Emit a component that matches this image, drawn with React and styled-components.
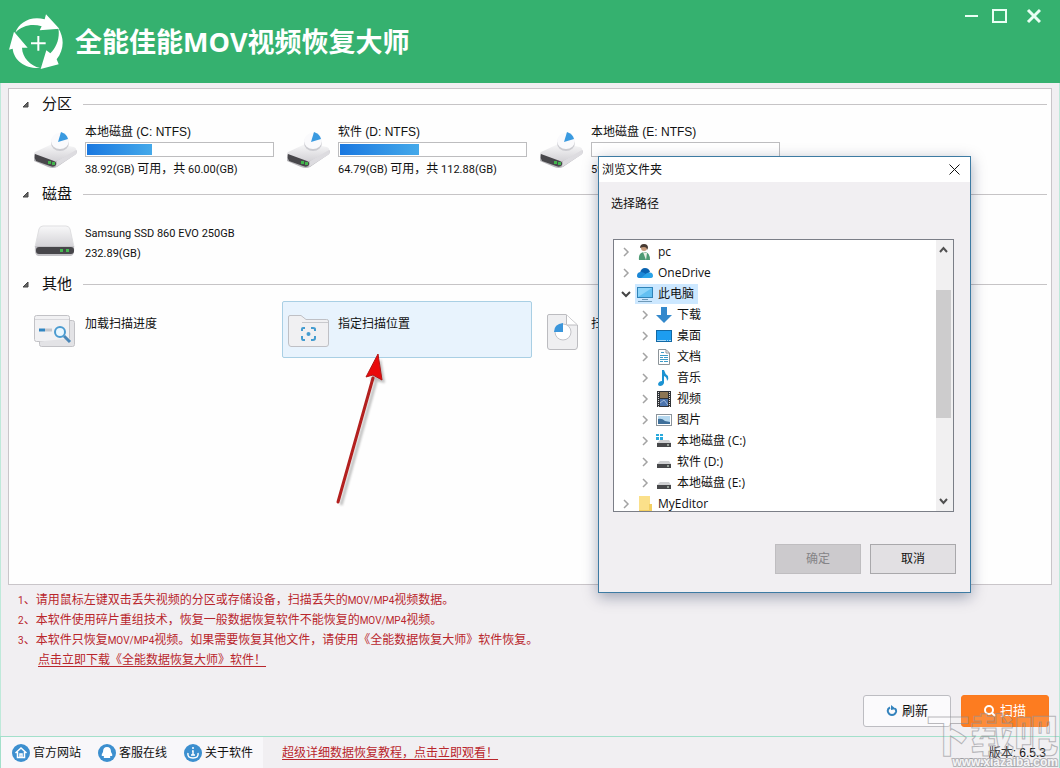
import React, { useState } from "react";
import styled, { createGlobalStyle } from "styled-components";

const GlobalStyle = createGlobalStyle`
  * {
    box-sizing: border-box;
  }
  body {
    margin: 0;
    font-family: "Liberation Sans", "Noto Sans CJK SC", sans-serif;
    font-size: 12px;
    line-height: 20px;
    color: #111;
  }
  button {
    font: inherit;
    color: inherit;
    padding: 0;
    border: 0;
    background: none;
  }
  svg {
    display: block;
    flex: none;
  }
`;

const Window = styled.div`
  position: relative;
  display: flex;
  flex-direction: column;
  min-height: 100vh;
  background: #f1eff2;
  overflow: hidden;
`;

const Header = styled.header`
  display: flex;
  align-items: center;
  height: 83px;
  padding: 0 19px 0 9px;
  background: #35b16f;
  color: #fff;
`;
const Title = styled.h1`
  flex: 1;
  margin: 0 0 0 12px;
  font: bold 27px/40px "Open Sans", "Noto Sans CJK SC", sans-serif;
`;
const WindowButtons = styled.div`
  display: flex;
  align-self: flex-start;
  gap: 13px;
  padding-top: 8px;
`;
const WindowButton = styled.button`
  width: 15px;
  height: 16px;
  margin-left: ${(p) => (p.$apart ? "6px" : "0")};
`;

const Main = styled.main`
  flex: 1;
  display: flex;
  flex-direction: column;
  padding: 5px 7px 9px;
  border: solid #bfe9da;
  border-width: 0 1px;
`;
const Panel = styled.div`
  flex: 1;
  padding: 5px 4px 0 12px;
  background: #fefefe;
  border: 1px solid #c9c5c9;
`;
const Section = styled.section`
  height: 90px;
`;
const SectionHeader = styled.h2`
  display: flex;
  align-items: center;
  margin: 0;
  height: 20px;
  font-size: 15px;
  font-weight: normal;
  &::after {
    content: "";
    flex: 1;
    margin-left: 11px;
    border-top: 1px solid #c6c4c6;
  }
  svg {
    margin-right: 13px;
  }
`;
const Tiles = styled.div`
  display: grid;
  grid-template-columns: repeat(auto-fill, 250px);
  gap: 3px;
  padding: 7px 0 0 8px;
`;
const Tile = styled.button`
  display: flex;
  height: 57px;
  padding: ${(p) => (p.$drive ? "0 0 0 4px" : "12px 0 0 4px")};
  border: 1px solid ${(p) => (p.$active ? "#a9cfe4" : "transparent")};
  border-radius: 2px;
  background: ${(p) => (p.$active ? "#e8f3fd" : "none")};
  text-align: left;
  > svg {
    margin-top: ${(p) => (p.$drive ? "6px" : "-6px")};
  }
`;
const TileText = styled.div`
  width: 189px;
  margin-left: 7px;
`;
const TileTitle = styled.div`
  height: 20px;
`;
const Small = styled.div`
  height: 20px;
  font-family: Roboto, "Noto Sans CJK SC", sans-serif;
  font-size: 11px;
  white-space: nowrap;
`;
const Han = styled.span`
  font-size: 12px;
`;
const Bar = styled.div`
  height: 15px;
  margin-bottom: 2px;
  padding: 1px;
  border: 1px solid #bdbdbf;
  background: #fff;
`;
const BarFill = styled.div`
  height: 11px;
  background: linear-gradient(90deg, #1a78e0, #44a9ea);
`;

const Notices = styled.ol`
  margin: 5px 0 25px;
  padding: 0 0 0 10px;
  list-style: none;
  color: #b9262c;
`;
const Notice = styled.li`
  height: 20px;
  font-family: Roboto, "Noto Sans CJK SC", sans-serif;
  padding-left: ${(p) => (p.$indent ? "20px" : "0")};
`;
const Latin = styled.span`
  font-size: 10px;
`;
const RedLink = styled.a`
  color: #b9262c;
  text-decoration: underline;
  text-underline-offset: 2px;
`;

const Actions = styled.div`
  display: flex;
  justify-content: flex-end;
  gap: 10px;
  padding-right: 3px;
`;
const Action = styled.button`
  display: flex;
  align-items: center;
  justify-content: center;
  gap: 4px;
  width: 88px;
  height: 32px;
  font-size: 13px;
  border-radius: 3px;
  border: 1px solid ${(p) => (p.$primary ? "#fb7a1e" : "#bdbdc2")};
  background: ${(p) => (p.$primary ? "#fd7c20" : "#fbfafc")};
  color: ${(p) => (p.$primary ? "#fff" : "#111")};
`;

const Footer = styled.footer`
  display: flex;
  align-items: center;
  height: 32px;
  padding-right: 13px;
  border: 1px solid #a3e0cb;
  border-bottom: 0;
`;
const FooterNav = styled.nav`
  display: flex;
  align-items: center;
  gap: 17px;
  height: 31px;
  padding: 0 10px 0 11px;
  margin-right: 19px;
  background: #f8f7fa;
`;
const NavLink = styled.a`
  display: flex;
  align-items: center;
  gap: 3px;
  color: #111;
  text-decoration: none;
`;
const Version = styled.span`
  margin-left: auto;
`;

/* folder dialog */
const Dialog = styled.div`
  position: absolute;
  left: 598px;
  top: 156px;
  width: 373px;
  border: 1px solid #3d7ba3;
  background: #f1eff2;
  box-shadow: 0 4px 14px rgba(0, 20, 60, 0.35);
  font-family: "Open Sans", "Noto Sans CJK SC", sans-serif;
`;
const DialogHeader = styled.div`
  display: flex;
  align-items: center;
  justify-content: space-between;
  height: 25px;
  padding: 0 10px 0 3px;
  background: #fff;
`;
const DialogBody = styled.div`
  padding: 12px 14px 18px;
`;
const DialogLabel = styled.div`
  margin: 0 0 25px -2px;
`;
const TreeBox = styled.div`
  display: flex;
  height: 273px;
  margin-right: 2px;
  overflow: hidden;
  border: 1px solid #7b7e87;
  background: #fff;
`;
const Tree = styled.ul`
  flex: 1;
  margin: 0;
  padding: 1px 0 0 7px;
  list-style: none;
`;
const TreeRow = styled.li`
  display: flex;
  align-items: center;
  height: 21px;
  padding-left: ${(p) => (p.$level ? "19px" : "0")};
`;
const Twisty = styled.button`
  width: 10px;
  height: 10px;
  margin-right: 4px;
`;
const TreeLabel = styled.span`
  display: flex;
  align-items: center;
  gap: 5px;
  padding: 0 4px 0 2px;
  background: ${(p) => (p.$selected ? "#cde8ff" : "none")};
`;
const ScrollBar = styled.div`
  display: flex;
  flex-direction: column;
  width: 17px;
  padding-right: 2px;
  background: #f1f0f1;
`;
const ScrollButton = styled.button`
  display: flex;
  align-items: center;
  justify-content: center;
  height: 19px;
`;
const ScrollTrack = styled.div`
  flex: 1;
  padding-top: 31px;
`;
const ScrollThumb = styled.div`
  height: 128px;
  background: #cdcccd;
`;
const DialogButtons = styled.div`
  display: flex;
  justify-content: flex-end;
  gap: 9px;
  margin-top: 32px;
`;
const DialogButton = styled.button`
  width: 86px;
  height: 30px;
  border: 1px solid ${(p) => (p.disabled ? "#bfbdc0" : "#a9a8ab")};
  background: ${(p) => (p.disabled ? "#cccacd" : "#e2e0e3")};
  color: ${(p) => (p.disabled ? "#858487" : "#111")};
`;

const Arrow = styled.svg`
  position: absolute;
  left: 330px;
  top: 350px;
  pointer-events: none;
`;
const ArrowShadow = styled.g`
  filter: blur(1px);
  opacity: 0.3;
`;
const Watermark = styled.div`
  position: absolute;
  right: 2px;
  bottom: 0;
  text-align: right;
  pointer-events: none;
  font-family: "Noto Sans CJK SC", sans-serif;
  font-weight: 900;
  color: rgba(255, 255, 255, 0.15);
  -webkit-text-stroke: 1px rgba(140, 140, 145, 0.6);
`;
const WatermarkName = styled.div`
  font-size: 44px;
  line-height: 46px;
`;
const WatermarkUrl = styled.div`
  font: bold 12px/12px "Liberation Sans", sans-serif;
  color: #f4f4f6;
  -webkit-text-stroke: 2px rgba(140, 140, 145, 0.6);
  paint-order: stroke;
`;

const Logo = () => (
  <svg width="54" height="56" viewBox="27 42 162 168" fill="#fff">
    <path d="M46 98C56 68 92 46 134 58L138 43L178 86L119 91L125 79C96 70 66 77 46 98Z" />
    <path d="M175 84C194 116 192 150 170 178L176 193L122 207L139 151L151 160C171 141 180 112 175 84Z" />
    <path d="M42 95L83 143L66 143C67 173 91 197 120 204C78 207 42 183 38 146L27 149Z" />
    <path d="M112 108h6v19h19v6h-19v19h-6v-19h-19v-6h19z" />
  </svg>
);

const DriveIcon = () => (
  <svg width="44" height="44" viewBox="1 0 44 44">
    <defs>
      <linearGradient id="shell" x1="0" y1="0" x2="0" y2="1">
        <stop offset="0" stopColor="#f8f8f9" />
        <stop offset="1" stopColor="#d3d2d6" />
      </linearGradient>
    </defs>
    <path d="M2 25L17 18Q20 16 24 17L42 21Q45 23 43 26L24 39Q20 41 15 39L1 33Q-1 30 2 25Z" fill="#b9b8bc" />
    <path d="M2 24L17 17Q20 15 25 16L41 19Q45 21 42 24L24 33Q20 34 16 32L3 27Q0 26 2 24Z" fill="url(#shell)" />
    <path d="M24 33L43 22Q45 25 42 27L23 39Z" fill="#dddce0" />
    <path d="M2 26L21 33Q24 34 23 37Q21 40 17 38L3 33Q1 30 2 26Z" fill="#48474b" />
    <path d="M15 33h3v3h-3zM19 34h3v3h-3z" fill="#43b44d" />
    <ellipse cx="27" cy="15" rx="9" ry="8" fill="#cbcbd0" />
    <ellipse cx="27" cy="13" rx="9" ry="8" fill="#fafafc" />
    <path d="M25 14L28 4Q34 6 35 11Z" fill="#3a9ae0" />
  </svg>
);

const DiskIcon = () => (
  <svg width="44" height="44" viewBox="1 -1 44 44">
    <path d="M6 10Q7 7 10 7H33Q36 7 37 10L41 28H2Z" fill="url(#shell)" stroke="#dfdfe1" />
    <path d="M2 27H41Q42 36 38 37H5Q1 36 2 27Z" fill="#c3c2c6" />
    <rect x="3" y="28" width="38" height="7" rx="3" fill="#47464a" />
    <path d="M27 30h3v3h-3zM33 30h3v3h-3z" fill="#45b850" />
  </svg>
);

const ProgressIcon = () => (
  <svg width="44" height="44" viewBox="0 -2 44 44" fill="#f1f1f3" stroke="#c2c2c6">
    <rect x="5.500" y="10.500" width="35" height="21" rx="2" fill="#e3e3e6" />
    <rect x="0.500" y="5.500" width="35" height="26" rx="2" />
    <path d="M5.500 31.500V34.500Q5.500 36.500 7.500 36.500H38.500Q40.500 36.500 40.500 34.500V28" fill="#e3e3e6" />
    <path d="M1 9.500H35" stroke="#d8d8dc" />
    <path d="M5 20H11" stroke="#3186c2" strokeWidth="3" />
    <path d="M11 20H18" stroke="#c5c7cc" strokeWidth="3" />
    <path d="M30 26L36 32" stroke="#4b87b8" strokeWidth="3" />
    <circle cx="26" cy="22" r="5" fill="#e9f7ff" stroke="#4b9bd0" strokeWidth="2" />
  </svg>
);

const FolderIcon = () => (
  <svg width="44" height="44" viewBox="0 -1 44 44" fill="none">
    <path d="M1.500 34V8Q1.500 6.500 3 6.500H14L19 10.500H39.500Q41.500 10.500 41.500 12V35Q41.500 37.500 39 37.500H4Q1.500 37.500 1.500 34Z" fill="#f0f0f2" stroke="#bfc0c5" />
    <path d="M15 13.500H41" stroke="#c8c9cd" />
    <path d="M15 22V20Q15 19 16 19H18M24 19H26Q28 19 28 20V22M28 27V29Q28 31 26 31H24M18 31H16Q15 31 15 29V27" stroke="#439cd0" strokeWidth="2" />
    <circle cx="21.500" cy="25" r="2" fill="#439cd0" />
  </svg>
);

const ReportIcon = () => (
  <svg width="44" height="44" viewBox="0 0 44 44">
    <path d="M9 6.500H26L37.500 17V38Q37.500 41.500 35 41.500H10Q7.500 41.500 7.500 39V8Q7.500 6.500 9 6.500Z" fill="#efeff1" stroke="#bcbcc0" />
    <path d="M26.500 7V17H37" fill="#fff" stroke="#bcbcc0" />
    <circle cx="23" cy="24" r="8" fill="#fff" stroke="#c3c3c8" />
    <path d="M23 24H14Q14 16 23 15Z" fill="#3b96db" />
  </svg>
);

const treeIcons = {
  user: (
    <>
      <path d="M2 16Q1 9 7 8Q13 8 13 16Z" fill="#4f9b75" />
      <path d="M6 8L9 16L10 9Z" fill="#e9efe6" />
      <circle cx="7" cy="4" r="3" fill="#c59a7a" />
      <path d="M3 4Q3 0 7 0Q11 0 11 4L10 6Q10 3 7 3Q5 3 3 4Z" fill="#463a32" />
    </>
  ),
  cloud: (
    <>
      <path d="M3 8Q4 3 8 3Q12 3 13 7L8 10Z" fill="#0a63b0" />
      <path d="M0 11Q0 7 4 7Q6 7 9 9L13 13H3Q0 13 0 11Z" fill="#1b87d6" />
      <path d="M4 13L10 8Q16 6 16 11Q16 13 13 13Z" fill="#2aa3e8" />
    </>
  ),
  computer: (
    <>
      <rect x="0.500" y="1.500" width="15" height="10" fill="#62c0f2" stroke="#2f83b8" />
      <path d="M1 2H15L1 11Z" fill="#8ed5fa" />
      <path d="M5 13.500h6M1 15.500h14" stroke="#6f9ab8" />
    </>
  ),
  download: <path d="M5 0H11V8H16L8 16L0 8H5Z" fill="#3489cc" />,
  desktop: (
    <>
      <rect x="0.500" y="2.500" width="15" height="11" fill="#1d9df0" stroke="#1269a5" />
      <path d="M1 12.500H15" stroke="#a5d9fa" strokeDasharray="9 1 1 1" />
    </>
  ),
  document: (
    <>
      <path d="M2.500 0.500H10L13.500 4V15.500H2.500Z" fill="#fff" stroke="#8c9499" />
      <path d="M10 1V4H13" fill="none" stroke="#8c9499" />
      <path d="M5 3.500H8M4 6.500H12M4 8.500H7M8 8.500H12M4 10.500H12M4 12.500H7M8 12.500H12" stroke="#3d9cc8" />
    </>
  ),
  music: <path d="M6 0H8Q9 4 12 6Q13 9 11 11Q11 7 8 6V13Q7 16 4 16Q2 16 2 14Q3 11 6 11Z" fill="#1c93d2" />,
  video: (
    <>
      <rect x="1" width="14" height="16" fill="#2f3236" />
      <path d="M2.500 1V16M13.500 1V16" stroke="#dcdcdc" strokeDasharray="1 1" />
      <rect x="4" y="1" width="8" height="6" fill="#8d7653" />
      <rect x="4" y="8" width="8" height="7" fill="#4a74ae" />
      <path d="M4 12L8 9L12 14" stroke="#9db7da" fill="none" />
    </>
  ),
  picture: (
    <>
      <rect x="0.500" y="2.500" width="15" height="11" fill="#fff" stroke="#8b949b" />
      <rect x="2" y="4" width="12" height="8" fill="#b5d8ef" />
      <path d="M2 7Q6 6 9 9L14 10V12H2Z" fill="#3e6f9a" />
    </>
  ),
  system: (
    <>
      <path d="M0 1h3v2h-3zM4 1h3v2h-3zM0 4h3v3h-3zM4 4h3v3h-3z" fill="#2aa9dc" />
      <path d="M4 7H13L15 10H1Z" fill="#cfd0d2" />
      <rect x="1" y="10" width="14" height="4" fill="#47484a" />
      <path d="M11 12h2" stroke="#e5f7e5" />
    </>
  ),
  drive: (
    <>
      <path d="M4 7H13L15 10H1Z" fill="#cfd0d2" />
      <rect x="1" y="10" width="14" height="4" fill="#47484a" />
      <path d="M11 12h2" stroke="#e5f7e5" />
    </>
  ),
  folder: (
    <>
      <path d="M2 0H13V16H2Z" fill="#fbe08a" />
      <path d="M12 8H15V16H2V14H12Z" fill="#f3cf62" />
    </>
  ),
};

const TreeIcon = ({ name }) => (
  <svg width="16" height="16" viewBox="0 0 16 16">
    {treeIcons[name]}
  </svg>
);

const drives = [
  { name: "本地磁盘 (C: NTFS)", free: 38.92, total: 60 },
  { name: "软件 (D: NTFS)", free: 64.79, total: 112.88 },
  { name: "本地磁盘 (E: NTFS)", free: 59.9, total: 60 },
];

const folders = [
  { name: "pc", icon: "user", level: 0 },
  { name: "OneDrive", icon: "cloud", level: 0 },
  { name: "此电脑", icon: "computer", level: 0, open: true },
  { name: "下载", icon: "download", level: 1 },
  { name: "桌面", icon: "desktop", level: 1 },
  { name: "文档", icon: "document", level: 1 },
  { name: "音乐", icon: "music", level: 1 },
  { name: "视频", icon: "video", level: 1 },
  { name: "图片", icon: "picture", level: 1 },
  { name: "本地磁盘 (C:)", icon: "system", level: 1 },
  { name: "软件 (D:)", icon: "drive", level: 1 },
  { name: "本地磁盘 (E:)", icon: "drive", level: 1 },
  { name: "MyEditor", icon: "folder", level: 0 },
];

const others = [
  { name: "加载扫描进度", Icon: ProgressIcon },
  { name: "指定扫描位置", Icon: FolderIcon },
  { name: "扫描文件", Icon: ReportIcon },
];

const Heading = ({ children }) => (
  <SectionHeader>
    <svg width="8" height="8" viewBox="0 0 8 8">
      <path d="M7 2V7H2Z" fill="#666" stroke="#444" />
    </svg>
    {children}
  </SectionHeader>
);

const FolderDialog = () => {
  const [selected, setSelected] = useState("此电脑");

  return (
    <Dialog role="dialog" aria-labelledby="dialog-title">
      <DialogHeader>
        <span id="dialog-title">浏览文件夹</span>
        <button aria-label="关闭对话框">
          <svg width="11" height="11" viewBox="0 0 11 11">
            <path d="M0.500 0.500L10.500 10.500M10.500 0.500L0.500 10.500" stroke="#111" />
          </svg>
        </button>
      </DialogHeader>
      <DialogBody>
        <DialogLabel id="path-label">选择路径</DialogLabel>
        <TreeBox>
          <Tree role="tree" aria-labelledby="path-label">
            {folders.map((f) => (
              <TreeRow key={f.name} role="treeitem" $level={f.level} onClick={() => setSelected(f.name)}>
                <Twisty aria-label={f.name}>
                  <svg width="10" height="10" viewBox="0 0 10 10" fill="none">
                    {f.open ? (
                      <path d="M1 3L5 7L9 3" stroke="#444" strokeWidth="2" />
                    ) : (
                      <path d="M3 1L7 5L3 9" stroke="#a3a3a3" strokeWidth="1.500" />
                    )}
                  </svg>
                </Twisty>
                <TreeLabel $selected={f.name === selected}>
                  <TreeIcon name={f.icon} />
                  {f.name}
                </TreeLabel>
              </TreeRow>
            ))}
          </Tree>
          <ScrollBar>
            <ScrollButton aria-label="向上滚动">
              <svg width="9" height="7" viewBox="0 0 9 7" fill="none">
                <path d="M1 6L4.500 2L8 6" stroke="#505050" strokeWidth="2" />
              </svg>
            </ScrollButton>
            <ScrollTrack>
              <ScrollThumb />
            </ScrollTrack>
            <ScrollButton aria-label="向下滚动">
              <svg width="9" height="7" viewBox="0 0 9 7" fill="none">
                <path d="M1 1L4.500 5L8 1" stroke="#505050" strokeWidth="2" />
              </svg>
            </ScrollButton>
          </ScrollBar>
        </TreeBox>
        <DialogButtons>
          <DialogButton disabled>确定</DialogButton>
          <DialogButton>取消</DialogButton>
        </DialogButtons>
      </DialogBody>
    </Dialog>
  );
};

const App = () => {
  const [active, setActive] = useState("指定扫描位置");

  return (
    <Window>
      <GlobalStyle />
      <Header>
        <Logo />
        <Title>全能佳能MOV视频恢复大师</Title>
        <WindowButtons>
          <WindowButton aria-label="最小化">
            <svg width="15" height="16" viewBox="0 0 15 16">
              <path d="M1 8H14" stroke="#e9fff4" strokeWidth="2" />
            </svg>
          </WindowButton>
          <WindowButton aria-label="最大化">
            <svg width="15" height="16" viewBox="0 0 15 16">
              <rect x="1" y="2" width="13" height="12" fill="none" stroke="#e9fff4" strokeWidth="2" />
            </svg>
          </WindowButton>
          <WindowButton aria-label="关闭" $apart>
            <svg width="15" height="16" viewBox="0 0 15 16">
              <path d="M2 2L14 14M14 2L2 14" stroke="#e9fff4" strokeWidth="3" />
            </svg>
          </WindowButton>
        </WindowButtons>
      </Header>

      <Main>
        <Panel>
          <Section>
            <Heading>分区</Heading>
            <Tiles>
              {drives.map((d) => (
                <Tile key={d.name} $drive>
                  <DriveIcon />
                  <TileText>
                    <TileTitle>{d.name}</TileTitle>
                    <Bar>
                      <BarFill style={{ width: `${(1 - d.free / d.total) * 100}%` }} />
                    </Bar>
                    <Small>
                      {d.free.toFixed(2)}(GB) <Han>可用，共</Han> {d.total.toFixed(2)}(GB)
                    </Small>
                  </TileText>
                </Tile>
              ))}
            </Tiles>
          </Section>
          <Section>
            <Heading>磁盘</Heading>
            <Tiles>
              <Tile>
                <DiskIcon />
                <TileText>
                  <Small>Samsung SSD 860 EVO 250GB</Small>
                  <Small>232.89(GB)</Small>
                </TileText>
              </Tile>
            </Tiles>
          </Section>
          <Section>
            <Heading>其他</Heading>
            <Tiles>
              {others.map(({ name, Icon }) => (
                <Tile key={name} $active={name === active} onClick={() => setActive(name)}>
                  <Icon />
                  <TileText>
                    <TileTitle>{name}</TileTitle>
                  </TileText>
                </Tile>
              ))}
            </Tiles>
          </Section>
        </Panel>

        <Notices>
          <Notice>
            <Latin>1</Latin>、请用鼠标左键双击丢失视频的分区或存储设备，扫描丢失的<Latin>MOV/MP4</Latin>视频数据。
          </Notice>
          <Notice>
            <Latin>2</Latin>、本软件使用碎片重组技术，恢复一般数据恢复软件不能恢复的<Latin>MOV/MP4</Latin>视频。
          </Notice>
          <Notice>
            <Latin>3</Latin>、本软件只恢复<Latin>MOV/MP4</Latin>视频。如果需要恢复其他文件，请使用《全能数据恢复大师》软件恢复。
          </Notice>
          <Notice $indent>
            <RedLink href="#download">点击立即下载《全能数据恢复大师》软件！</RedLink>
          </Notice>
        </Notices>

        <Actions>
          <Action>
            <svg width="12" height="12" viewBox="0 0 12 12" fill="none">
              <path d="M4 2.500Q1 4 2 7Q3 10 6 10Q9 10 10 7Q10.500 5 9 3.500" stroke="#3483bd" strokeWidth="2" />
              <path d="M5 0V5L10 4Z" fill="#3483bd" />
            </svg>
            刷新
          </Action>
          <Action $primary>
            <svg width="12" height="12" viewBox="0 0 12 12" fill="none" stroke="#fff" strokeWidth="2">
              <circle cx="5" cy="5" r="4" />
              <path d="M8 8L11 11" />
            </svg>
            扫描
          </Action>
        </Actions>
      </Main>

      <Footer>
        <FooterNav>
          <NavLink href="#home">
            <svg width="18" height="18" viewBox="0 0 18 18" fill="none" stroke="#fff">
              <circle cx="9" cy="9" r="9" fill="#3c8fcf" stroke="none" />
              <path d="M3.500 9L9 4L14.500 9M5.500 8V13.500H12.500V8M8 13V10H10V13" strokeWidth="1.500" />
            </svg>
            官方网站
          </NavLink>
          <NavLink href="#service">
            <svg width="18" height="18" viewBox="0 0 18 18">
              <circle cx="9" cy="9" r="9" fill="#3c8fcf" />
              <path d="M9 3Q13 3 13 8Q15 11 14 12L12 12Q13 14 11 14H7Q5 14 6 12L4 12Q3 11 5 8Q5 3 9 3Z" fill="#fff" />
            </svg>
            客服在线
          </NavLink>
          <NavLink href="#about">
            <svg width="18" height="18" viewBox="0 0 18 18" fill="none" stroke="#fff">
              <circle cx="9" cy="9" r="9" fill="#3c8fcf" stroke="none" />
              <path d="M9 3V5M8 7H9V11M7 11H11M4 9Q3 14 9 14Q15 14 14 9" strokeWidth="1.500" />
            </svg>
            关于软件
          </NavLink>
        </FooterNav>
        <RedLink href="#tutorial">超级详细数据恢复教程，点击立即观看！</RedLink>
        <Version>版本: 6.5.3</Version>
      </Footer>

      <Arrow width="66" height="164" viewBox="0 0 66 164">
        <ArrowShadow transform="translate(3 3)">
          <path d="M8 152L43 28" stroke="#333" strokeWidth="3" />
          <path d="M48 6L37 27L52 30Z" fill="#333" />
        </ArrowShadow>
        <path d="M8 152L43 28" stroke="#b3201f" strokeWidth="3" strokeLinecap="round" />
        <path d="M48 4L36 27L43 25L52 30Z" fill="#ea0a0a" stroke="#b01717" />
      </Arrow>
      <FolderDialog />
      <Watermark aria-hidden="true">
        <WatermarkName>下载吧</WatermarkName>
        <WatermarkUrl>www.xiazaiba.com</WatermarkUrl>
      </Watermark>
    </Window>
  );
};

export default App;
